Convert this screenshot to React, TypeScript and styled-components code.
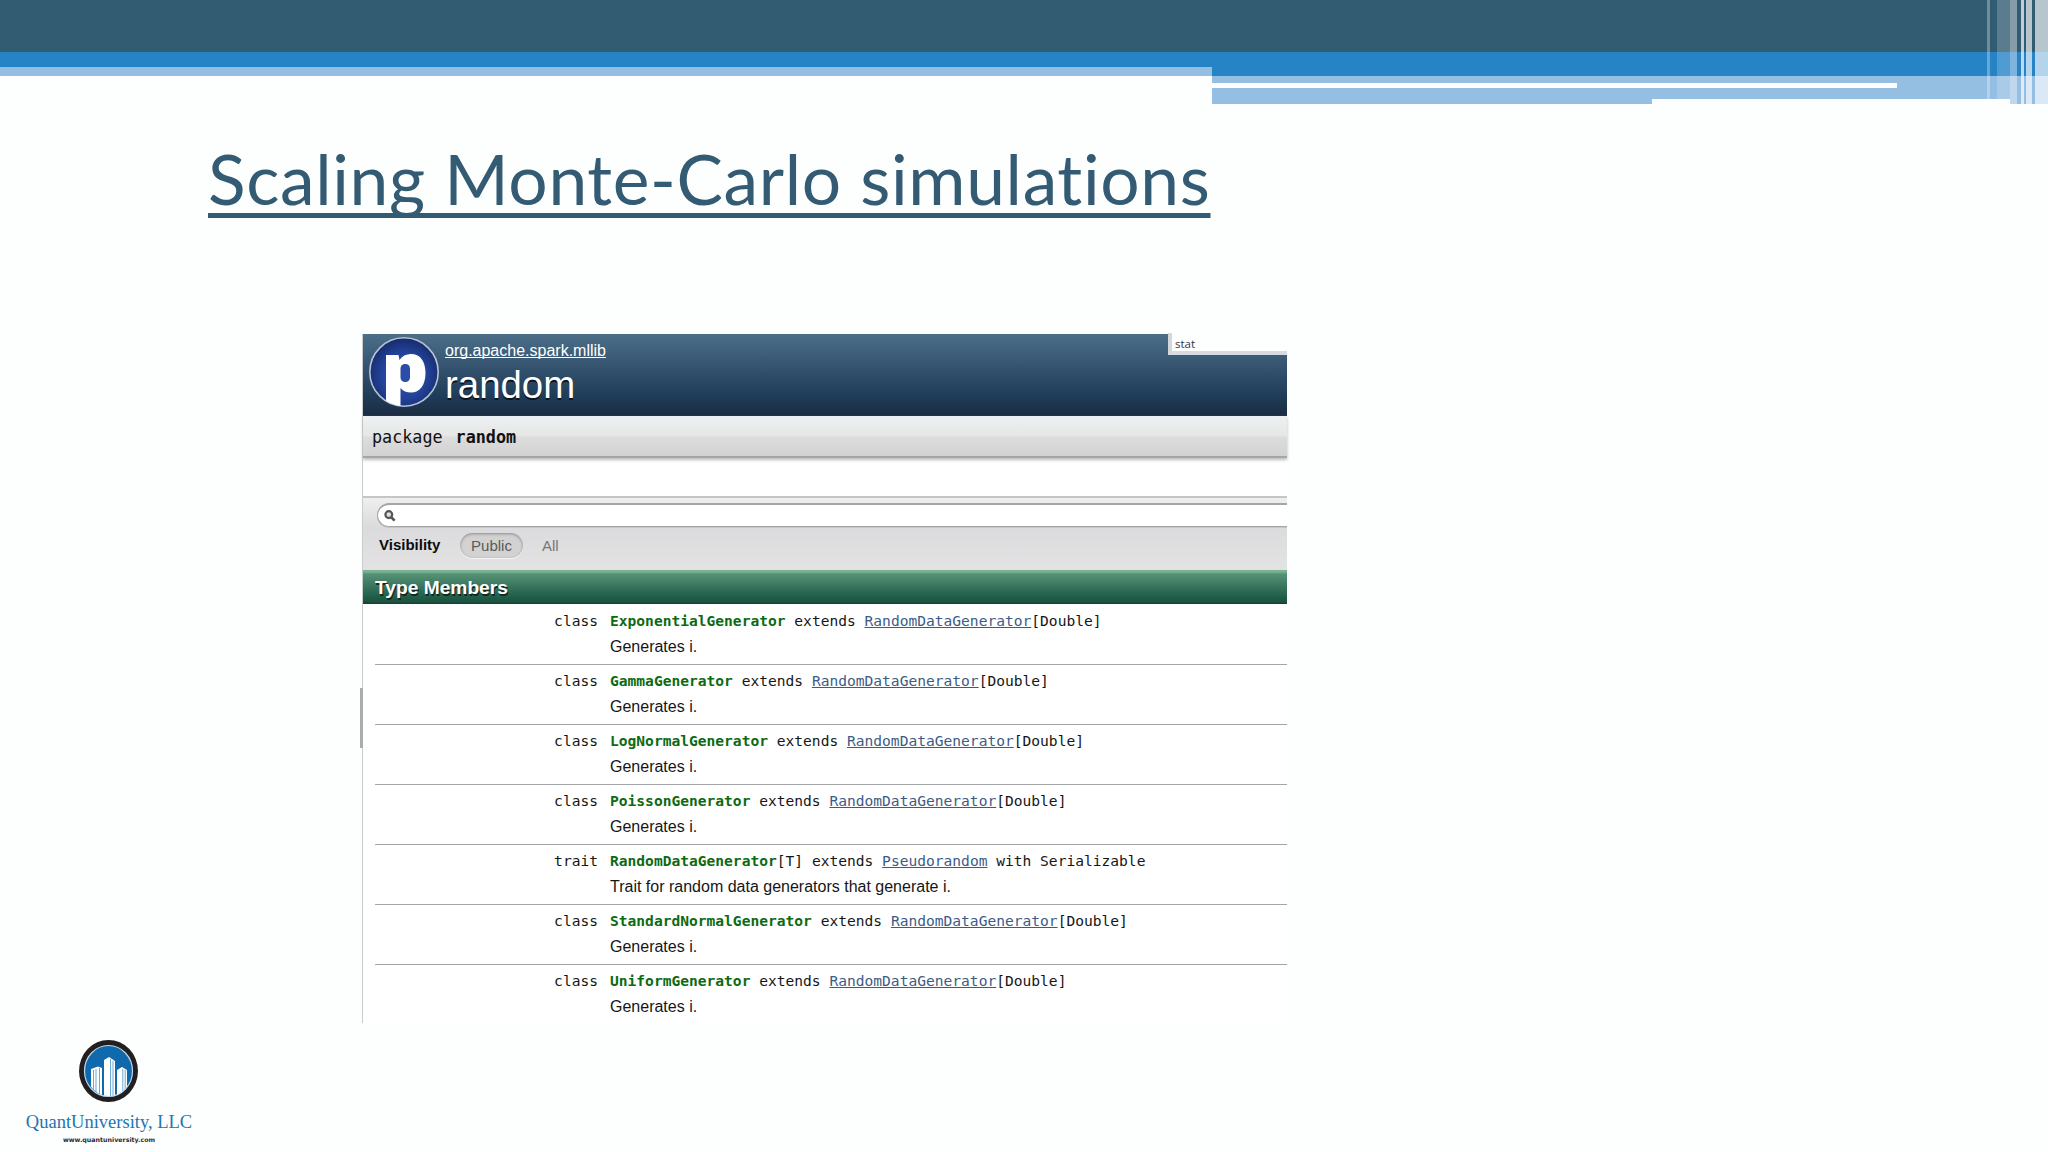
import React from "react";
import styled, { createGlobalStyle } from "styled-components";

const Global = createGlobalStyle`
  *, *::before, *::after { box-sizing: border-box; }
  body { margin: 0; background: #fdfefe; }
`;

const sans = `"Liberation Sans", Arial, sans-serif`;
const mono = `"DejaVu Sans Mono", Consolas, monospace`;

const Slide = styled.main`
  position: relative;
  display: flex;
  flex-direction: column;
  width: 2048px;
  height: 1152px;
  overflow: hidden;
  background: #fdfefe;
  font-family: ${sans};
`;

const Banner = styled.header`
  position: relative;
  display: flex;
  flex-direction: column;
  height: 104px;
  flex: none;
`;
const DarkBand = styled.div`
  height: 52px;
  background: #325c71;
`;
const BannerColumns = styled.div`
  display: grid;
  grid-template-columns: 1212px 440px 358px 38px;
  height: 52px;
`;
const Column = styled.div<{ $blue: number; $total: number }>`
  height: ${(p) => p.$total}px;
  background: linear-gradient(#2583c6 ${(p) => p.$blue}px, #94bfe2 ${(p) => p.$blue}px);
`;
const WhiteRule = styled.div`
  position: absolute;
  left: 1212px;
  top: 83px;
  width: 685px;
  height: 5px;
  background: #fff;
`;
const Stripe = styled.i<{ $x: number; $w: number; $a: number; $h?: number }>`
  position: absolute;
  top: 0;
  left: ${(p) => p.$x}px;
  width: ${(p) => p.$w}px;
  height: ${(p) => p.$h ?? 104}px;
  background: rgba(255, 255, 255, ${(p) => p.$a});
`;

const Title = styled.h1`
  margin: 28px 0 0 208px;
  height: 103px;
  flex: none;
  font: 400 69.5px/92px Lato, sans-serif;
  letter-spacing: 0.65px;
  white-space: nowrap;
  color: #335b73;
  text-decoration: underline;
  text-decoration-thickness: 5px;
  text-underline-offset: 8px;
  text-decoration-skip-ink: none;
`;

const Doc = styled.section`
  position: relative;
  display: flex;
  flex-direction: column;
  flex: none;
  width: 925px;
  height: 689px;
  margin: 99px 0 0 362px;
  border-left: 1px solid #c9cccc;
  background: #fff;
`;
const ResizeGrip = styled.span`
  position: absolute;
  left: -3px;
  top: 354px;
  width: 3px;
  height: 60px;
  background: #a9adad;
`;
const DocHeader = styled.div`
  display: flex;
  height: 82px;
  flex: none;
  padding: 2px 0 0 6px;
  gap: 6px;
  background: linear-gradient(#4c6e87, #3b5a76 30%, #1f3c58 75%, #1c2c42);
  color: #fff;
`;
const Names = styled.div`
  display: flex;
  flex-direction: column;
`;
const Parent = styled.a`
  font-size: 16px;
  line-height: 18px;
  margin-top: 6px;
  text-decoration: underline;
  text-decoration-skip-ink: none;
  text-underline-offset: 1px;
`;
const PackageName = styled.span`
  font-size: 38.4px;
  line-height: 44px;
  margin-top: 3px;
  text-shadow: 0 2px 0 #0b141e;
`;
const StatTip = styled.div`
  position: absolute;
  right: 0;
  top: -1px;
  width: 119px;
  height: 22px;
  padding-left: 3px;
  border-left: 4px solid #d3d7dc;
  border-bottom: 4px solid #d8dbe2;
  background: #fdfefe;
  font: 11.5px/21px "Open Sans", sans-serif;
  color: #333447;
`;
const Signature = styled.div`
  display: flex;
  height: 42px;
  flex: none;
  padding-left: 9px;
  gap: 13px;
  font: 16.75px/42px ${mono};
  color: #111;
  background: linear-gradient(#edf1f3, #e6e6e5 50%, #dcdddc 52%, #d2d2d2);
  border-bottom: 2px solid #a5a5a5;
  box-shadow: 0 2px 3px #bbb;
`;
const Spacer = styled.div`
  height: 38px;
  flex: none;
`;
const Filter = styled.div`
  display: flex;
  flex-direction: column;
  height: 74px;
  flex: none;
  padding: 5px 0 0 14px;
  border-top: 2px solid #c3c5c6;
  background: linear-gradient(#efefef, #dbdbdd 40%, #e3e3e4);
`;
const Search = styled.div`
  display: flex;
  align-items: center;
  height: 24px;
  padding-left: 6px;
  border: solid #a6a6a8;
  border-width: 2px 0 1px 1px;
  border-radius: 12px 0 0 12px;
  background: #fff;
  box-shadow: 0 1px 0 #c6c6c8;
`;
const Visibility = styled.div`
  display: flex;
  align-items: center;
  height: 24px;
  margin-top: 6px;
  padding-left: 2px;
  font-size: 15px;
  color: #777;
`;
const Label = styled.b`
  width: 81px;
  margin-top: -1px;
  color: #0c0c0c;
`;
const Pill = styled.span`
  width: 63px;
  height: 25px;
  margin-right: 19px;
  border-radius: 13px;
  text-align: center;
  line-height: 26px;
  color: #5a5a5a;
  background: #d2d2d3;
  box-shadow: inset 0 1px 3px #8c8c8c, 0 1px 1px #f6f6f6;
`;
const Heading = styled.h2`
  height: 34px;
  flex: none;
  margin: 0;
  padding-left: 12px;
  font: bold 19.2px/35px ${sans};
  color: #fff;
  text-shadow: 1px 2px 0 #12281f;
  background: linear-gradient(#7ab394 0, #7ab394 2px, #559275 4px, #3f7b63 40%, #1f5d49 80%, #1c523f 94%, #173b30);
`;
const Members = styled.ol`
  list-style: none;
  margin: 0;
  padding: 1px 0 0 12px;
`;
const Member = styled.li`
  display: grid;
  grid-template-columns: 223px 1fr;
  grid-template-rows: 23px 25px;
  column-gap: 12px;
  height: 60px;
  padding-top: 4px;
  border-bottom: 1px solid #a3a5a8;
  font: 14.58px/23px ${mono};
  color: #161616;
  white-space: pre;
  &:last-child { border-bottom: 0; }
`;
const Kind = styled.span`
  text-align: right;
`;
const Sign = styled.span`
  b { color: #0c6b12; }
  a {
    color: #3d5c85;
    text-decoration: underline;
    text-underline-offset: 1px;
    text-decoration-skip-ink: none;
  }
`;
const Comment = styled.p`
  grid-column: 2;
  margin: 2px 0 0;
  font: 16px/25px ${sans};
`;

const Brand = styled.footer`
  position: absolute;
  left: 18px;
  top: 1039px;
  width: 182px;
  display: flex;
  flex-direction: column;
  align-items: center;
`;
const BrandName = styled.span`
  margin-top: 7px;
  font: 18.5px/24px "Liberation Serif", serif;
  color: #2474ae;
  white-space: nowrap;
`;
const BrandUrl = styled.span`
  font: bold 6.3px/12px "DejaVu Sans", sans-serif;
  color: #2e2a2b;
`;

const stripes: [number, number, number, number?][] = [
  [1987, 3, 0.3, 99],
  [1997, 13, 0.2, 99],
  [2010, 7, 0.4],
  [2021, 3, 0.7],
  [2026, 6, 0.65],
  [2035, 13, 0.65],
];

type Row = { kind: string; name: string; params?: string; base: string; rest: string; text: string };
const gen = (name: string): Row => ({
  kind: "class", name, base: "RandomDataGenerator", rest: "[Double]", text: "Generates i.",
});
const rows: Row[] = [
  gen("ExponentialGenerator"),
  gen("GammaGenerator"),
  gen("LogNormalGenerator"),
  gen("PoissonGenerator"),
  {
    kind: "trait", name: "RandomDataGenerator", params: "[T]", base: "Pseudorandom",
    rest: " with Serializable", text: "Trait for random data generators that generate i.",
  },
  gen("StandardNormalGenerator"),
  gen("UniformGenerator"),
];

const PackageIcon = () => (
  <svg width="70" height="72" viewBox="0 0 70 72">
    <defs>
      <radialGradient id="disc" cx="50%" cy="55%" r="55%">
        <stop offset="0" stopColor="#2f56b4" />
        <stop offset="0.6" stopColor="#23439a" />
        <stop offset="1" stopColor="#162b6c" />
      </radialGradient>
      <clipPath id="discClip"><circle cx="35" cy="36" r="34" /></clipPath>
    </defs>
    <circle cx="35" cy="36" r="34.2" fill="url(#disc)" stroke="#b4c3d6" strokeWidth="1.6" />
    <g clipPath="url(#discClip)" fill="#fff">
      <path d="M17 19 H29.500 L30.500 24 C33 20 37 18 42 18 C51 18 56.500 25 56.500 37 C56.500 49 51 56.500 42 56.500 C37.500 56.500 34 55 31.500 52 V73 H17Z" />
      <rect x="31.500" y="28" width="9.500" height="18" rx="4.500" fill="#2a4da8" />
    </g>
  </svg>
);

const SearchIcon = () => (
  <svg width="12" height="12" viewBox="0 0 13 13" fill="none" stroke="#555">
    <circle cx="5.200" cy="5" r="3.700" fill="#ddd" strokeWidth="2.400" />
    <path d="M8 8 L11.500 11.500" strokeWidth="3" />
  </svg>
);

const BrandMark = () => (
  <svg width="60" height="64" viewBox="0 0 60 64">
    <defs><clipPath id="mark"><ellipse cx="30" cy="32.500" rx="23" ry="24.500" /></clipPath></defs>
    <ellipse cx="29.500" cy="32" rx="29.500" ry="31" fill="#231f20" />
    <ellipse cx="29.500" cy="32" rx="24" ry="25.500" fill="#0f69ac" stroke="#b9d9ec" strokeWidth="1.200" />
    <g clipPath="url(#mark)">
      <path d="M25 21 L30 18 L36 22 V60 H25Z M12 30 L19 27.500 L23 29 V60 H12Z M38 31 L43 28 L48 31 V60 H38Z" fill="#fff" />
      <path d="M31.500 20V60 M34 22V60 M14.500 31V60 M17 30V60 M20.500 29V60 M43.800 30V60 M46.200 31V60" stroke="#6aa9d3" strokeWidth="1" />
    </g>
  </svg>
);

export default function App() {
  return (
    <Slide>
      <Global />
      <Banner>
        <DarkBand />
        <BannerColumns>
          <Column $blue={15.5} $total={24} />
          <Column $blue={24} $total={52} />
          <Column $blue={24} $total={47} />
          <Column $blue={24} $total={52} />
        </BannerColumns>
        <WhiteRule />
        {stripes.map(([x, w, a, h]) => (
          <Stripe key={x} $x={x} $w={w} $a={a} $h={h} />
        ))}
      </Banner>
      <Title>Scaling Monte-Carlo simulations</Title>
      <Doc>
        <DocHeader>
          <PackageIcon />
          <Names>
            <Parent>org.apache.spark.mllib</Parent>
            <PackageName>random</PackageName>
          </Names>
        </DocHeader>
        <StatTip>stat</StatTip>
        <Signature>
          <span>package</span>
          <b>random</b>
        </Signature>
        <Spacer />
        <Filter>
          <Search><SearchIcon /></Search>
          <Visibility>
            <Label>Visibility</Label>
            <Pill>Public</Pill>
            <span>All</span>
          </Visibility>
        </Filter>
        <Heading>Type Members</Heading>
        <Members>
          {rows.map((r) => (
            <Member key={r.name}>
              <Kind>{r.kind}</Kind>
              <Sign>
                <b>{r.name}</b>{r.params} extends <a>{r.base}</a>{r.rest}
              </Sign>
              <Comment>{r.text}</Comment>
            </Member>
          ))}
        </Members>
        <ResizeGrip />
      </Doc>
      <Brand>
        <BrandMark />
        <BrandName>QuantUniversity, LLC</BrandName>
        <BrandUrl>www.quantuniversity.com</BrandUrl>
      </Brand>
    </Slide>
  );
}
